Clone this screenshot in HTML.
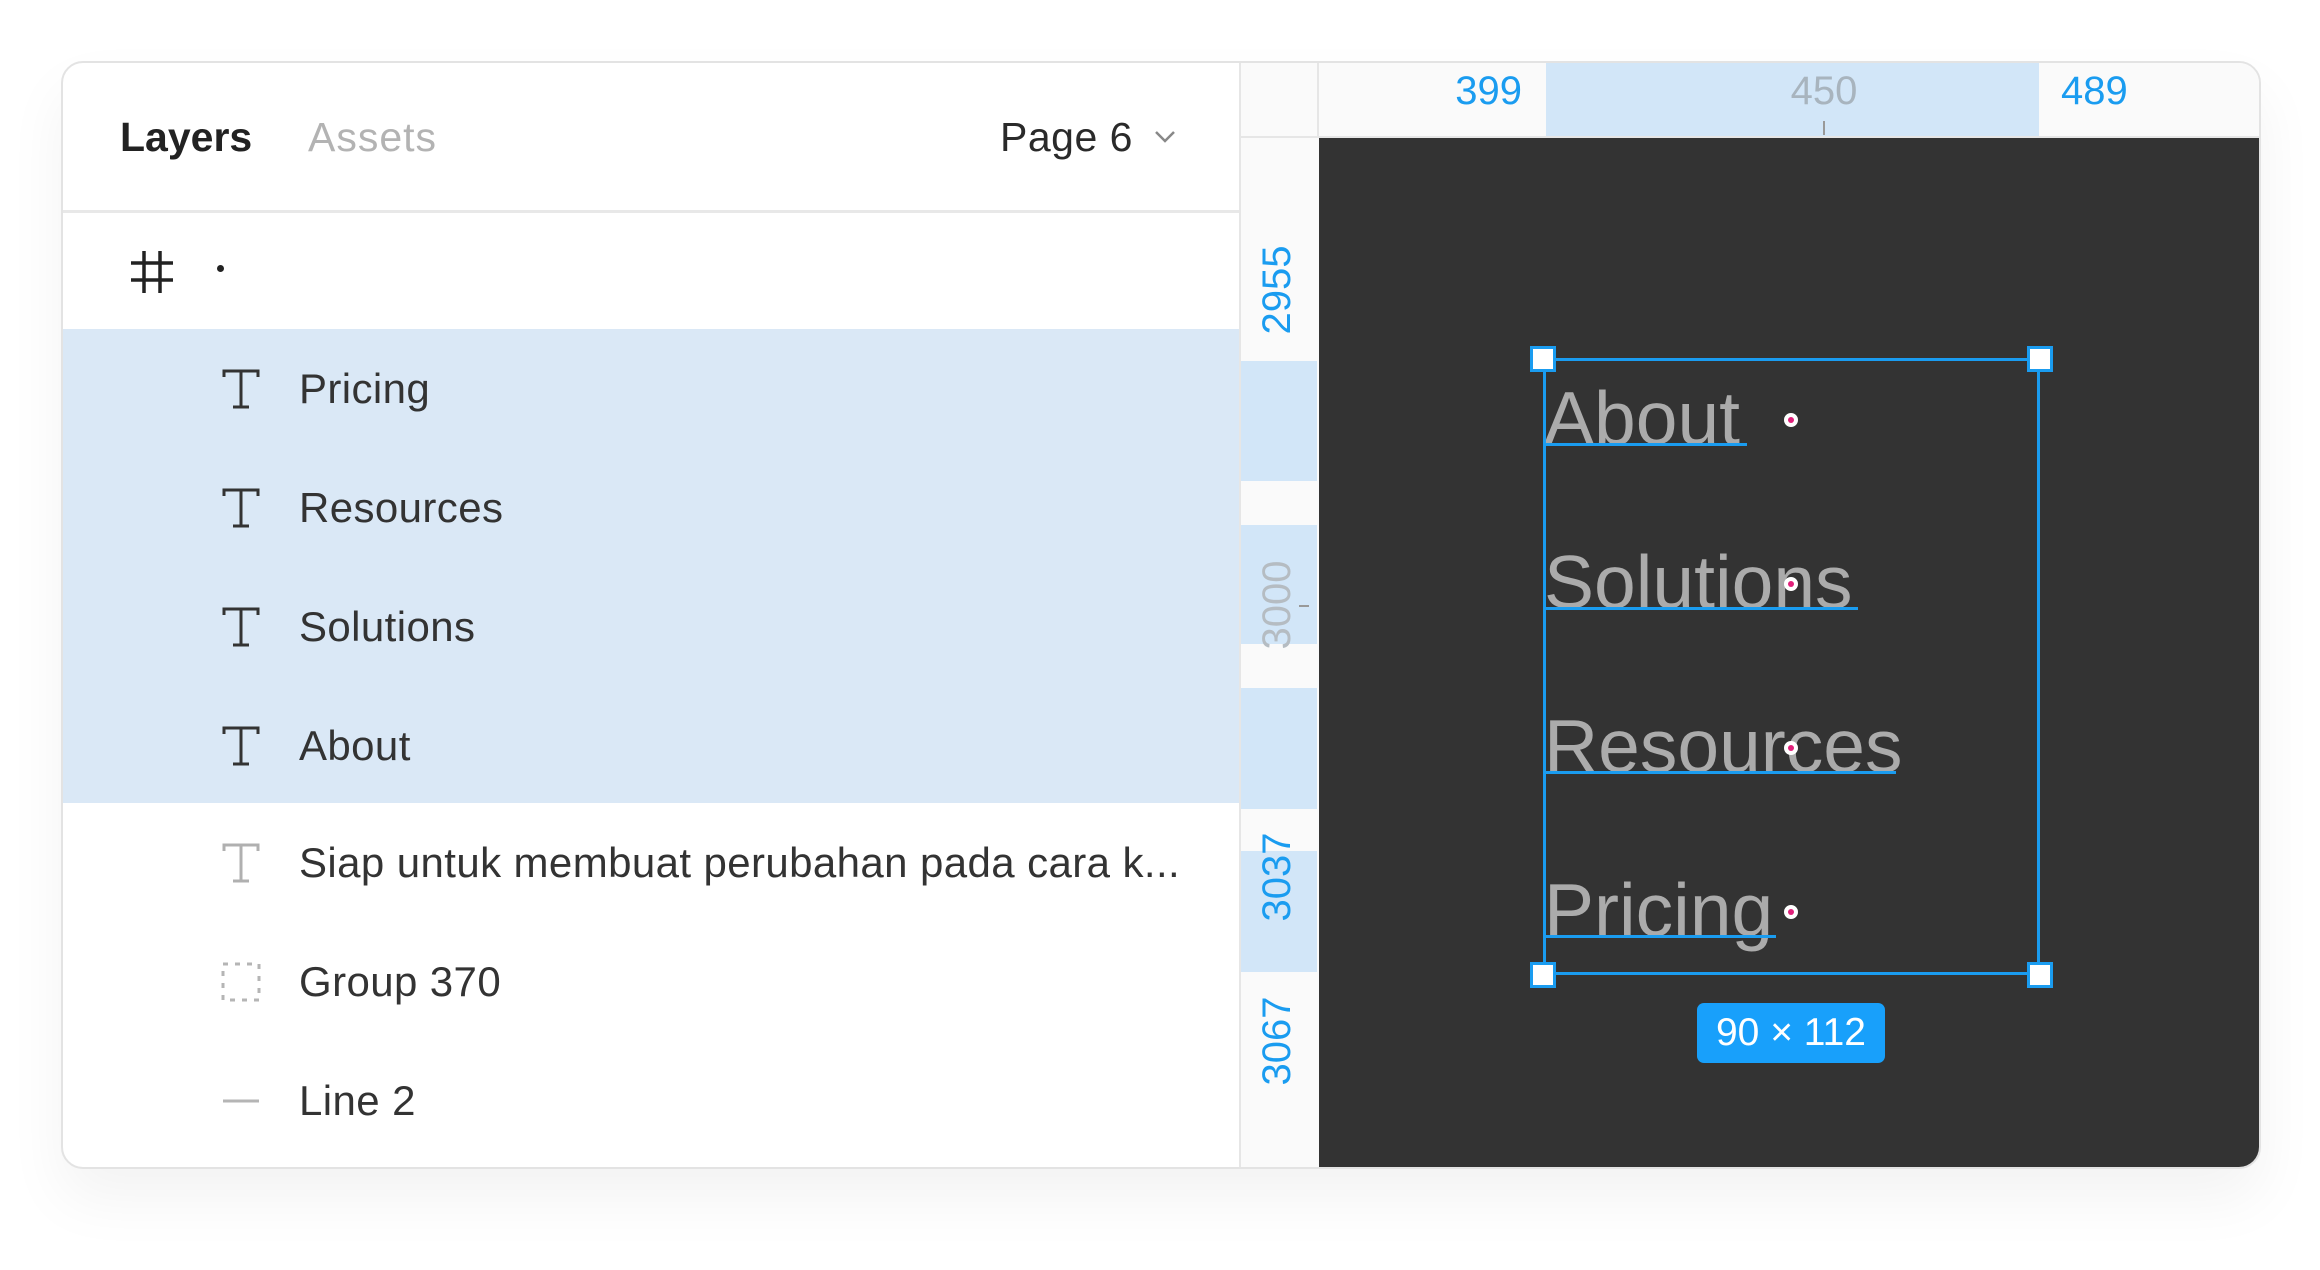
<!DOCTYPE html>
<html><head><meta charset="utf-8"><style>
*{margin:0;padding:0;box-sizing:border-box}
body{width:2320px;height:1270px;background:#fff;position:relative;overflow:hidden;font-family:"Liberation Sans",sans-serif}
.card{position:absolute;left:61px;top:61px;width:2200px;height:1108px;border:2px solid #e3e3e3;border-radius:22px;overflow:hidden;background:#fff;box-shadow:0 30px 60px rgba(0,0,0,0.05)}
.a{position:absolute}
.row{position:absolute;left:0;width:1176px;height:119px}
.lbl{position:absolute;left:236px;font-size:42px;letter-spacing:0.4px;color:#333;line-height:119px;top:0}
.ic{position:absolute;left:158px;top:40px}
.rn{position:absolute;font-size:40px;transform:rotate(-90deg);transform-origin:center;width:130px;text-align:center;height:44px;line-height:44px}
.ct{position:absolute;left:1481px;font-size:75px;color:#ababab;line-height:1}
.ul{position:absolute;left:1481px;height:3px;background:#1a9cf0}
.dot{position:absolute;width:14px;height:14px;border-radius:50%;background:#fff;border:4px solid #fff}
.dot::after{content:"";position:absolute;left:0px;top:0px;width:6px;height:6px;border-radius:50%;background:#e0207a}
.h{position:absolute;width:26px;height:26px;background:#fff;border:3px solid #1a9cf0}
</style></head><body>
<div class="card">
 <div class="a" style="left:57px;top:50px;font-size:41px;font-weight:bold;color:#222;line-height:48px">Layers</div>
 <div class="a" style="left:245px;top:50px;font-size:41px;letter-spacing:1px;color:#b3b3b3;line-height:48px">Assets</div>
 <div class="a" style="left:937px;top:50px;font-size:41px;letter-spacing:0.5px;color:#2a2a2a;line-height:48px">Page 6</div>
 <svg class="a" style="left:1090px;top:64px" width="24" height="20"><path d="M3 5 L12 14 L21 5" fill="none" stroke="#888" stroke-width="2.5"/></svg>
 <div class="a" style="left:0;top:147px;width:1176px;height:3px;background:#e8e8e8"></div>
 <div class="a" style="left:1176px;top:0;width:2px;height:1108px;background:#e6e6e6"></div>
 <div class="row" style="top:149px">
  <svg class="a" style="left:66px;top:37px" width="46" height="46"><path d="M15 2V44 M31 2V44 M2 14H44 M2 31H44" stroke="#222" stroke-width="3.5" fill="none"/></svg>
  <div class="a" style="left:154px;top:53px;width:7px;height:7px;background:#222;border-radius:50%"></div>
 </div>
 <div class="a" style="left:0;top:266px;width:1176px;height:474px;background:#daE8f6"></div>
 <div class="row" style="top:266px"><svg class="ic" width="40" height="40"><path d="M3 8V2H37V8 M20 2V38 M12 38H28" fill="none" stroke="#333" stroke-width="3"/></svg><div class="lbl">Pricing</div></div>
 <div class="row" style="top:385px"><svg class="ic" width="40" height="40"><path d="M3 8V2H37V8 M20 2V38 M12 38H28" fill="none" stroke="#333" stroke-width="3"/></svg><div class="lbl">Resources</div></div>
 <div class="row" style="top:504px"><svg class="ic" width="40" height="40"><path d="M3 8V2H37V8 M20 2V38 M12 38H28" fill="none" stroke="#333" stroke-width="3"/></svg><div class="lbl">Solutions</div></div>
 <div class="row" style="top:623px"><svg class="ic" width="40" height="40"><path d="M3 8V2H37V8 M20 2V38 M12 38H28" fill="none" stroke="#333" stroke-width="3"/></svg><div class="lbl">About</div></div>
 <div class="row" style="top:740px"><svg class="ic" width="40" height="40"><path d="M3 8V2H37V8 M20 2V38 M12 38H28" fill="none" stroke="#b0b0b0" stroke-width="3"/></svg><div class="lbl">Siap untuk membuat perubahan pada cara k...</div></div>
 <div class="row" style="top:859px"><svg class="ic" width="40" height="40"><rect x="2" y="2" width="36" height="36" fill="none" stroke="#b5b5b5" stroke-width="3" stroke-dasharray="5 7"/></svg><div class="lbl">Group 370</div></div>
 <div class="row" style="top:978px"><svg class="ic" width="40" height="40"><path d="M2 20H38" stroke="#b5b5b5" stroke-width="3"/></svg><div class="lbl">Line 2</div></div>

 <div class="a" style="left:1178px;top:0;width:1022px;height:75px;background:#fafafa"></div>
 <div class="a" style="left:1178px;top:0;width:78px;height:1108px;background:#fafafa"></div>
 <div class="a" style="left:1254px;top:0;width:2px;height:75px;background:#e6e6e6"></div>
 <div class="a" style="left:1178px;top:73px;width:1022px;height:2px;background:#e6e6e6"></div>
 <div class="a" style="left:1483px;top:0;width:493px;height:73px;background:#d2e6f8"></div>
 <div class="a" style="left:1359px;top:0;width:100px;text-align:right;font-size:40px;color:#1a9cf0;line-height:56px">399</div>
 <div class="a" style="left:1711px;top:0;width:100px;text-align:center;font-size:40px;color:#a8b4be;line-height:56px">450</div>
 <div class="a" style="left:1760px;top:58px;width:2px;height:14px;background:#999"></div>
 <div class="a" style="left:1998px;top:0;font-size:40px;color:#1a9cf0;line-height:56px">489</div>
 <div class="a" style="left:1178px;top:298px;width:76px;height:120px;background:#d2e6f8"></div>
 <div class="a" style="left:1178px;top:462px;width:76px;height:119px;background:#d2e6f8"></div>
 <div class="a" style="left:1178px;top:625px;width:76px;height:121px;background:#d2e6f8"></div>
 <div class="a" style="left:1178px;top:788px;width:76px;height:121px;background:#d2e6f8"></div>
 <div class="rn" style="left:1149px;top:205px;color:#1a9cf0">2955</div>
 <div class="rn" style="left:1149px;top:520px;color:#b5bcc2">3000</div>
 <div class="a" style="left:1236px;top:542px;width:10px;height:2px;background:#999"></div>
 <div class="rn" style="left:1149px;top:792px;color:#1a9cf0">3037</div>
 <div class="rn" style="left:1149px;top:956px;color:#1a9cf0">3067</div>

 <div class="a" style="left:1256px;top:75px;width:944px;height:1033px;background:#333"></div>
 <div class="ct" style="top:318px">About</div>
 <div class="ul" style="top:380px;width:203px"></div>
 <div class="ct" style="top:482px">Solutions</div>
 <div class="ul" style="top:544px;width:314px"></div>
 <div class="ct" style="top:646px">Resources</div>
 <div class="ul" style="top:708px;width:352px"></div>
 <div class="ct" style="top:810px">Pricing</div>
 <div class="ul" style="top:872px;width:232px"></div>
 <div class="dot" style="left:1721px;top:350px"></div>
 <div class="dot" style="left:1721px;top:514px"></div>
 <div class="dot" style="left:1721px;top:678px"></div>
 <div class="dot" style="left:1721px;top:842px"></div>
 <div class="a" style="left:1480px;top:295px;width:497px;height:617px;border:3px solid #1a9cf0"></div>
 <div class="h" style="left:1467px;top:283px"></div>
 <div class="h" style="left:1964px;top:283px"></div>
 <div class="h" style="left:1467px;top:899px"></div>
 <div class="h" style="left:1964px;top:899px"></div>
 <div class="a" style="left:1634px;top:940px;width:188px;height:60px;background:#18a0fb;border-radius:7px;color:#fff;font-size:39px;text-align:center;line-height:60px">90 × 112</div>
</div>
</body></html>
